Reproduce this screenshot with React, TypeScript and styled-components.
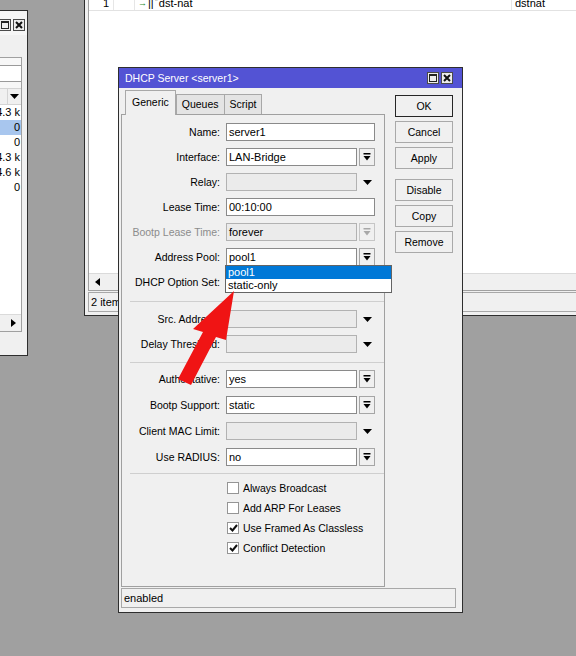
import styled, { createGlobalStyle } from "styled-components";

const GlobalStyle = createGlobalStyle`
  * { box-sizing: border-box; }
  html, body { margin: 0; padding: 0; background: #a0a0a0; }
  body {
    font-family: "Liberation Sans", Arial, sans-serif;
    font-size: 10.5px;
    color: #000;
  }
`;

const Desktop = styled.div`
  position: relative;
  width: 576px;
  height: 656px;
  overflow: hidden;
  background: #a0a0a0;
`;

const Window = styled.div<{ $x: number; $y: number; $w: number; $h: number }>`
  position: absolute;
  left: ${p => p.$x}px;
  top: ${p => p.$y}px;
  width: ${p => p.$w}px;
  height: ${p => p.$h}px;
  display: flex;
  flex-direction: column;
  background: #f0f0f0;
  border: 1px solid #2e2e2e;
`;

const TitleBar = styled.div<{ $active?: boolean }>`
  height: ${p => (p.$active ? "20px" : "24px")};
  flex: none;
  display: flex;
  align-items: center;
  padding: ${p => (p.$active ? "0 9px 0 6px" : "4px 2px 0 6px")};
  background: ${p => (p.$active ? "#5353d4" : "#f6f6f6")};
  color: #fff;
  font-size: 10.5px;
`;

const TitleText = styled.span`
  flex: 1;
  white-space: nowrap;
`;

const TitleButtons = styled.div`
  display: flex;
  gap: 2px;
`;

const TitleButton = styled.div`
  width: 12px;
  height: 12px;
  border: 1px solid #4a4a4a;
  background: #ececec;
  display: flex;
  align-items: center;
  justify-content: center;
`;

/* ---------- left statistics window ---------- */

const StatsBody = styled.div`
  flex: 1;
  display: flex;
  flex-direction: column;
  padding: 22px 5px 23px 0;
`;

const ListPanel = styled.div`
  flex: 1;
  display: flex;
  flex-direction: column;
  background: #fff;
  border: 1px solid #a0a0a0;
  overflow: hidden;
`;

const FilterBar = styled.div`
  height: 30px;
  flex: none;
  display: flex;
  align-items: center;
  background: #f7f7f7;
`;

const FilterInput = styled.div`
  flex: 1;
  height: 17px;
  background: #fff;
  border: 1px solid #9a9a9a;
  border-right: none;
`;

const HeaderRow = styled.div`
  height: 17px;
  flex: none;
  display: flex;
  justify-content: flex-end;
  background: #f0f0f0;
  border-top: 1px solid #d4d4d4;
  border-bottom: 1px solid #d4d4d4;
`;

const HeaderMenu = styled.div`
  width: 14px;
  display: flex;
  align-items: center;
  justify-content: center;
  border-left: 1px solid #d4d4d4;
`;

const StatRow = styled.div<{ $selected?: boolean }>`
  height: 15px;
  line-height: 15px;
  text-align: right;
  padding-right: 1px;
  font-size: 11px;
  background: ${p => (p.$selected ? "#a8c6ee" : "#fff")};
`;

const ListFill = styled.div`
  flex: 1;
`;

const HScroll = styled.div<{ $side: "start" | "end" }>`
  height: 17px;
  flex: none;
  display: flex;
  justify-content: ${p => (p.$side === "end" ? "flex-end" : "flex-start")};
  background: #f0f0f0;
  border-top: 1px solid #dadada;
`;

const ScrollArrow = styled.div`
  width: 16px;
  display: flex;
  align-items: center;
  justify-content: center;
  background: #f0f0f0;
`;

/* ---------- background NAT list window ---------- */

const NatBody = styled.div`
  flex: 1;
  display: flex;
  flex-direction: column;
  padding: 3px;
  gap: 1px;
`;

const NatHeader = styled.div`
  height: 13px;
  flex: none;
`;

const NatRow = styled.div`
  height: 17px;
  flex: none;
  display: flex;
  align-items: flex-end;
  border-bottom: 1px solid #e2e2e2;
  font-size: 11px;
`;

const NatCell = styled.div<{ $w: number; $align?: string }>`
  width: ${p => p.$w}px;
  height: 100%;
  flex: none;
  display: flex;
  align-items: flex-end;
  justify-content: ${p => (p.$align === "right" ? "flex-end" : "flex-start")};
  padding: 0 4px 1px 3px;
  line-height: 12px;
  border-right: 1px solid #e6e6e6;
  white-space: nowrap;
`;

const RuleIcon = styled.span`
  color: #1f8a2c;
  font-size: 9px;
  margin-right: 1px;
`;

const RuleFlag = styled.span`
  font-size: 8px;
  line-height: 8px;
  margin: 0 1px 4px;
`;

const StatusBar = styled.div`
  height: 20px;
  flex: none;
  border: 1px solid #a8a8a8;
  padding-left: 2px;
  line-height: 18px;
  font-size: 11px;
  white-space: nowrap;
  overflow: hidden;
`;

/* ---------- DHCP dialog ---------- */

const DialogBody = styled.div`
  flex: 1;
  display: flex;
  flex-direction: column;
  padding: 2px 6px 4px 2px;
  gap: 1px;
`;

const DialogMain = styled.div`
  flex: 1;
  display: flex;
  gap: 10px;
`;

const TabColumn = styled.div`
  width: 264px;
  display: flex;
  flex-direction: column;
`;

const Tabs = styled.div`
  height: 25px;
  flex: none;
  display: flex;
  align-items: flex-end;
  padding-left: 4px;
  margin-bottom: -1px;
  position: relative;
  z-index: 1;
`;

const Tab = styled.div<{ $active?: boolean }>`
  height: ${p => (p.$active ? "25px" : "20px")};
  margin-bottom: ${p => (p.$active ? "0" : "1px")};
  padding: ${p => (p.$active ? "5px 6px 0" : "3px 5px 0")};
  background: ${p => (p.$active ? "#f0f0f0" : "#e4e4e4")};
  border: 1px solid #a8a8a8;
  border-bottom: none;
  margin-right: ${p => (p.$active ? "0" : "-1px")};
  font-size: 10.5px;
  white-space: nowrap;
`;

const Panel = styled.div`
  flex: 1;
  border: 1px solid #a0a0a0;
  padding-top: 8px;
  display: flex;
  flex-direction: column;
`;

const Group = styled.div<{ $gap: number }>`
  display: flex;
  flex-direction: column;
  gap: ${p => p.$gap}px;
`;

const Separator = styled.div<{ $before: number; $after: number }>`
  height: 1px;
  flex: none;
  background: #cfcfcf;
  margin: ${p => p.$before}px 0 ${p => p.$after}px 8px;
`;

const Row = styled.div`
  height: 18px;
  display: flex;
  align-items: center;
`;

const Label = styled.div<{ $disabled?: boolean }>`
  width: 98px;
  margin-right: 6px;
  text-align: right;
  white-space: nowrap;
  color: ${p => (p.$disabled ? "#8c8c8c" : "#000")};
`;

const FieldWrap = styled.div`
  position: relative;
  display: flex;
  align-items: center;
`;

const Field = styled.div<{ $wide?: boolean; $disabled?: boolean }>`
  width: ${p => (p.$wide ? 149 : 131)}px;
  height: 18px;
  line-height: 16px;
  padding-left: 2px;
  font-size: 11px;
  background: ${p => (p.$disabled ? "#ebebeb" : "#fff")};
  border: 1px solid ${p => (p.$disabled ? "#b2b2b2" : "#8a8a8a")};
  white-space: nowrap;
`;

const ComboButton = styled.div<{ $disabled?: boolean }>`
  width: 16px;
  height: 18px;
  margin-left: 2px;
  display: flex;
  align-items: center;
  justify-content: center;
  background: #f0f0f0;
  border: 1px solid ${p => (p.$disabled ? "#c6c6c6" : "#a6a6a6")};
`;

const ArrowSlot = styled.div`
  width: 16px;
  height: 18px;
  margin-left: 2px;
  display: flex;
  align-items: center;
  justify-content: center;
`;

const DropList = styled.div`
  position: absolute;
  left: -1px;
  top: 17px;
  width: 167px;
  z-index: 3;
  background: #fff;
  border: 1px solid #646464;
`;

const DropItem = styled.div<{ $selected?: boolean }>`
  height: 13px;
  line-height: 13px;
  padding-left: 2px;
  font-size: 11px;
  background: ${p => (p.$selected ? "#0078d7" : "#fff")};
  color: ${p => (p.$selected ? "#fff" : "#000")};
`;

const CheckList = styled.div`
  display: flex;
  flex-direction: column;
  padding-left: 105px;
`;

const CheckRow = styled.div`
  height: 20px;
  display: flex;
  align-items: center;
  gap: 4px;
  font-size: 10.5px;
`;

const CheckBox = styled.div`
  width: 12px;
  height: 12px;
  background: #fff;
  border: 1px solid #959595;
  display: flex;
  align-items: center;
  justify-content: center;
`;

const ButtonColumn = styled.div`
  width: 58px;
  padding-top: 5px;
  display: flex;
  flex-direction: column;
  gap: 4px;
`;

const Button = styled.div<{ $default?: boolean; $spaced?: boolean }>`
  height: 22px;
  display: flex;
  align-items: center;
  justify-content: center;
  margin-top: ${p => (p.$spaced ? "6px" : "0")};
  background: #f0f0f0;
  border: 1px solid ${p => (p.$default ? "#262626" : "#a9a9a9")};
  font-size: 10.5px;
`;

const ArrowOverlay = styled.svg`
  position: absolute;
  left: 0;
  top: 0;
  pointer-events: none;
  z-index: 10;
`;

/* ---------- small drawings ---------- */

const DownArrow = ({ color = "#000" }: { color?: string }) => (
  <svg width="9" height="5" viewBox="0 0 9 5">
    <polygon points="0,0 9,0 4.5,5" fill={color} />
  </svg>
);

const ComboIcon = ({ color = "#000" }: { color?: string }) => (
  <svg width="8" height="8" viewBox="0 0 8 8">
    <rect x="0.5" y="0" width="7" height="1.5" fill={color} />
    <polygon points="0.5,3 7.5,3 4,7.5" fill={color} />
  </svg>
);

const SideArrow = ({ dir }: { dir: "left" | "right" }) => (
  <svg width="5" height="8" viewBox="0 0 5 8">
    <polygon points={dir === "left" ? "5,0 5,8 0,4" : "0,0 0,8 5,4"} fill="#000" />
  </svg>
);

const MaxGlyph = () => (
  <svg width="8" height="8" viewBox="0 0 8 8">
    <rect x="0.5" y="0.5" width="7" height="7" fill="none" stroke="#222" />
    <rect x="0.5" y="0.5" width="7" height="1.5" fill="#222" />
  </svg>
);

const CloseGlyph = () => (
  <svg width="8" height="8" viewBox="0 0 8 8">
    <path d="M1 1 L7 7 M7 1 L1 7" stroke="#111" strokeWidth="2" />
  </svg>
);

const Tick = () => (
  <svg width="9" height="8" viewBox="0 0 9 8">
    <path d="M1 4 L3.5 6.5 L8 1" fill="none" stroke="#111" strokeWidth="2" />
  </svg>
);

type FieldKind = "text" | "combo" | "empty" | "locked" | "pool";

interface FormField {
  label: string;
  value: string;
  kind: FieldKind;
}

const mainFields: FormField[] = [
  { label: "Name:", value: "server1", kind: "text" },
  { label: "Interface:", value: "LAN-Bridge", kind: "combo" },
  { label: "Relay:", value: "", kind: "empty" },
  { label: "Lease Time:", value: "00:10:00", kind: "text" },
  { label: "Bootp Lease Time:", value: "forever", kind: "locked" },
  { label: "Address Pool:", value: "pool1", kind: "pool" },
  { label: "DHCP Option Set:", value: "", kind: "empty" },
];

const delayFields: FormField[] = [
  { label: "Src. Address:", value: "", kind: "empty" },
  { label: "Delay Threshold:", value: "", kind: "empty" },
];

const authFields: FormField[] = [
  { label: "Authoritative:", value: "yes", kind: "combo" },
  { label: "Bootp Support:", value: "static", kind: "combo" },
  { label: "Client MAC Limit:", value: "", kind: "empty" },
  { label: "Use RADIUS:", value: "no", kind: "combo" },
];

const checks = [
  { label: "Always Broadcast", on: false },
  { label: "Add ARP For Leases", on: false },
  { label: "Use Framed As Classless", on: true },
  { label: "Conflict Detection", on: true },
];

const stats = [
  { v: "4.3 k" },
  { v: "0", selected: true },
  { v: "0" },
  { v: "4.3 k" },
  { v: "4.6 k" },
  { v: "0" },
];

function FormRow({ field }: { field: FormField }) {
  const { label, value, kind } = field;
  return (
    <Row>
      <Label $disabled={kind === "locked"}>{label}</Label>
      <FieldWrap>
        {kind === "text" && <Field $wide>{value}</Field>}
        {(kind === "combo" || kind === "pool") && (
          <>
            <Field>{value}</Field>
            <ComboButton>
              <ComboIcon />
            </ComboButton>
          </>
        )}
        {kind === "locked" && (
          <>
            <Field $disabled>{value}</Field>
            <ComboButton $disabled>
              <ComboIcon color="#a8a8a8" />
            </ComboButton>
          </>
        )}
        {kind === "empty" && (
          <>
            <Field $disabled />
            <ArrowSlot>
              <DownArrow />
            </ArrowSlot>
          </>
        )}
        {kind === "pool" && (
          <DropList>
            <DropItem $selected>pool1</DropItem>
            <DropItem>static-only</DropItem>
          </DropList>
        )}
      </FieldWrap>
    </Row>
  );
}

export default function App() {
  return (
    <Desktop>
      <GlobalStyle />

      <Window $x={-210} $y={10} $w={238} $h={346}>
        <TitleBar>
          <TitleText />
          <TitleButtons>
            <TitleButton>
              <MaxGlyph />
            </TitleButton>
            <TitleButton>
              <CloseGlyph />
            </TitleButton>
          </TitleButtons>
        </TitleBar>
        <StatsBody>
          <ListPanel>
            <FilterBar>
              <FilterInput />
            </FilterBar>
            <HeaderRow>
              <HeaderMenu>
                <DownArrow />
              </HeaderMenu>
            </HeaderRow>
            {stats.map((s, i) => (
              <StatRow key={i} $selected={s.selected}>
                {s.v}
              </StatRow>
            ))}
            <ListFill />
            <HScroll $side="end">
              <ScrollArrow>
                <SideArrow dir="right" />
              </ScrollArrow>
            </HScroll>
          </ListPanel>
        </StatsBody>
      </Window>

      <Window $x={84} $y={-24} $w={520} $h={340}>
        <NatBody>
          <ListPanel>
            <NatHeader />
            <NatRow>
              <NatCell $w={25} $align="right">1</NatCell>
              <NatCell $w={21} />
              <NatCell $w={377}>
                <RuleIcon>→</RuleIcon>||<RuleFlag>*</RuleFlag>dst-nat
              </NatCell>
              <NatCell $w={80}>dstnat</NatCell>
            </NatRow>
            <ListFill />
            <HScroll $side="start">
              <ScrollArrow>
                <SideArrow dir="left" />
              </ScrollArrow>
            </HScroll>
          </ListPanel>
          <StatusBar>2 items</StatusBar>
        </NatBody>
      </Window>

      <Window $x={118} $y={67} $w={345} $h={546}>
        <TitleBar $active>
          <TitleText>DHCP Server &lt;server1&gt;</TitleText>
          <TitleButtons>
            <TitleButton>
              <MaxGlyph />
            </TitleButton>
            <TitleButton>
              <CloseGlyph />
            </TitleButton>
          </TitleButtons>
        </TitleBar>
        <DialogBody>
          <DialogMain>
            <TabColumn>
              <Tabs>
                <Tab $active>Generic</Tab>
                <Tab>Queues</Tab>
                <Tab>Script</Tab>
              </Tabs>
              <Panel>
                <Group $gap={7}>
                  {mainFields.map(f => (
                    <FormRow key={f.label} field={f} />
                  ))}
                </Group>
                <Separator $before={10} $after={8} />
                <Group $gap={7}>
                  {delayFields.map(f => (
                    <FormRow key={f.label} field={f} />
                  ))}
                </Group>
                <Separator $before={9} $after={7} />
                <Group $gap={8}>
                  {authFields.map(f => (
                    <FormRow key={f.label} field={f} />
                  ))}
                </Group>
                <Separator $before={7} $after={4} />
                <CheckList>
                  {checks.map(c => (
                    <CheckRow key={c.label}>
                      <CheckBox>{c.on && <Tick />}</CheckBox>
                      {c.label}
                    </CheckRow>
                  ))}
                </CheckList>
              </Panel>
            </TabColumn>
            <ButtonColumn>
              <Button $default>OK</Button>
              <Button>Cancel</Button>
              <Button>Apply</Button>
              <Button $spaced>Disable</Button>
              <Button>Copy</Button>
              <Button>Remove</Button>
            </ButtonColumn>
          </DialogMain>
          <StatusBar>enabled</StatusBar>
        </DialogBody>
      </Window>

      <ArrowOverlay width="576" height="656" viewBox="0 0 576 656">
        <polygon
          points="234,291 226,340 216,337 191,385 178,379 203,332 193,329"
          fill="#f01414"
        />
      </ArrowOverlay>
    </Desktop>
  );
}
